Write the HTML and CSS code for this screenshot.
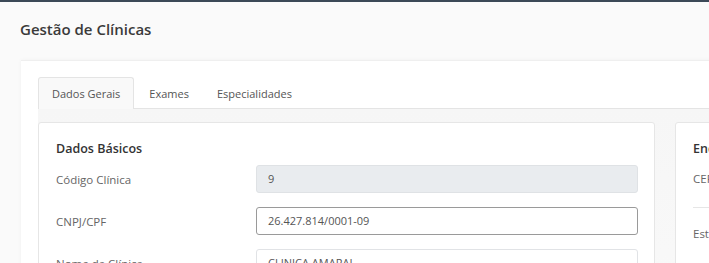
FILE: index.html
```html
<!DOCTYPE html>
<html lang="pt">
<head>
<meta charset="utf-8">
<link rel="stylesheet" href="styles.css">
</head>
<body>
<div class="topbar"></div>
<div class="page">
  <h1 class="title">Gestão de Clínicas</h1>
  <div class="card">
    <div class="tabs">
      <div class="tab active">Dados Gerais</div>
      <div class="tab">Exames</div>
      <div class="tab">Especialidades</div>
    </div>
    <div class="tab-content">
      <div class="panel panel-left">
        <h2 class="panel-title">Dados Básicos</h2>
        <div class="row">
          <label class="label">Código Clínica</label>
          <div class="input disabled">9</div>
        </div>
        <div class="row">
          <label class="label">CNPJ/CPF</label>
          <div class="input focused">26.427.814/0001-09</div>
        </div>
        <div class="row">
          <label class="label">Nome da Clínica</label>
          <div class="input">CLINICA AMARAL</div>
        </div>
      </div>
      <div class="panel panel-right">
        <h2 class="panel-title">Endereço</h2>
        <div class="rrow">CEP</div>
        <div class="rrow sep">Estado</div>
      </div>
    </div>
  </div>
</div>
</body>
</html>
```
FILE: styles.css
```css
html, body { margin: 0; padding: 0; overflow: hidden; }
body {
  background: #fafafa;
  font-family: "Open Sans", "Noto Sans", sans-serif;
  color: #555;
  width: 709px;
  height: 263px;
}
.topbar { height: 2px; background: #3c4957; }
.page { padding: 0 0 0 21px; width: 1400px; }
.title {
  margin: 0;
  padding: 16px 0 0 0;
  height: 42px;
  font-size: 15px;
  font-weight: 600;
  color: #3a3a3a;
  line-height: 22px;
  margin-left: -1px;
}
.card {
  background: #fff;
  border-top: 1px solid #efefef;
  box-shadow: 0 0 4px rgba(0,0,0,0.04);
  padding: 16px 0 0 17px;
  height: 300px;
}
.tabs {
  display: flex;
  border-bottom: 1px solid #e4e4e4;
  height: 31px;
}
.tab {
  font-size: 11px;
  line-height: 31px;
  padding: 0 14px;
  color: #555;
  border: 1px solid transparent;
  border-bottom: none;
  border-radius: 3px 3px 0 0;
  margin-bottom: -1px;
}
.tab.active {
  background: #f9f9f9;
  border-color: #e4e4e4;
  height: 31px;
  padding: 0 13px 0 13px;
}
.tabs .tab:last-child { padding-left: 12px; }
.tab-content {
  background: linear-gradient(#f6f6f6, #f9f9f9);
  padding-top: 13px;
  display: flex;
  gap: 20px;
  height: 200px;
}
.panel {
  background: #fff;
  border: 1px solid #e6e6e6;
  border-radius: 3px;
  padding: 16px 16px 0 17px;
}
.panel-left { width: 582px; }
.panel-right { width: 600px; }
.panel-title {
  margin: 0 0 6px 0;
  font-size: 12.5px;
  font-weight: 600;
  color: #333;
  line-height: 20px;
}
.row {
  display: flex;
  align-items: center;
  height: 28px;
  margin-bottom: 14px;
}
.label {
  width: 200px;
  flex: none;
  font-size: 11.5px;
  color: #666;
}
.input {
  flex: 1;
  box-sizing: border-box;
  height: 28px;
  border: 1px solid #e1e3e6;
  border-radius: 3px;
  padding: 0 11px;
  font-size: 11px;
  line-height: 26px;
  color: #555;
  background: #fff;
}
.input.disabled { background: #e9ecef; border-color: #dfe2e5; }
.input.focused { border-color: #9a9a9a; }
.rrow {
  font-size: 11.5px;
  color: #666;
  height: 28px;
  line-height: 28px;
  margin-bottom: 14px;
}
.rrow.sep { border-top: 1px solid #e6e6e6; padding-top: 12px; height: 28px; }
```
